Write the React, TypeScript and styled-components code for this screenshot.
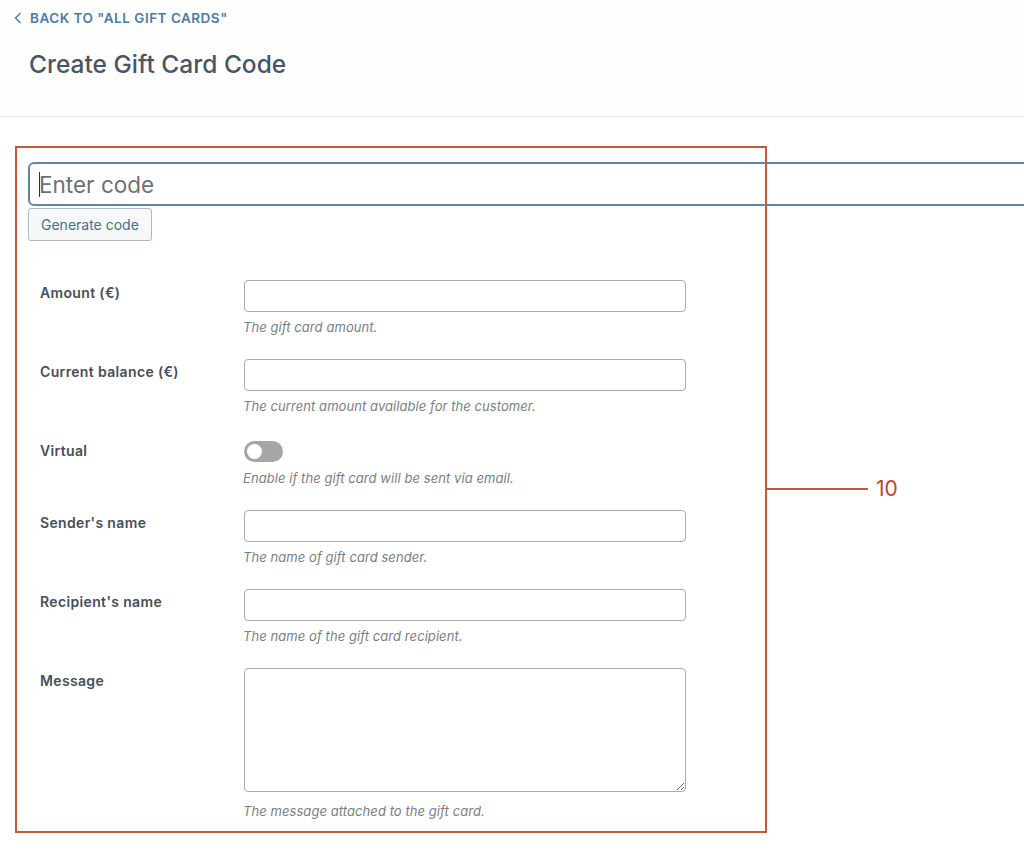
import React from "react";
import styled, { createGlobalStyle } from "styled-components";

const Global = createGlobalStyle`
  html, body { margin: 0; padding: 0; background: #ffffff; overflow: hidden; }
  body { font-family: Inter, "Noto Sans", "Liberation Sans", sans-serif; }
  * { box-sizing: border-box; }
`;

const Page = styled.div`
  position: relative;
  width: 1024px;
  height: 854px;
  overflow: hidden;
  background: #ffffff;
`;

const Header = styled.header`
  padding: 10px 0 0 0;
  height: 117px;
  border-bottom: 1px solid #e3e6e6;
  background: #fefefe;
`;

const BackLink = styled.a`
  display: flex;
  align-items: center;
  gap: 8px;
  padding-left: 14px;
  height: 16px;
  color: #4b7ba3;
  font-size: 13.5px;
  font-weight: 600;
  letter-spacing: 0.5px;
  text-transform: uppercase;
  text-decoration: none;
`;

const Title = styled.h1`
  margin: 23px 0 0 29px;
  font-size: 24.5px;
  line-height: 30px;
  font-weight: 500;
  color: #4a5563;
  letter-spacing: 0;
`;

const Form = styled.form`
  padding: 45px 0 0 28px;
`;

const CodeWrap = styled.div`
  position: relative;
  width: 1010px;
`;

const CodeInput = styled.input`
  display: block;
  width: 100%;
  height: 44px;
  border: 2px solid #5f86a9;
  border-radius: 6px;
  padding: 0 9px;
  font-family: inherit;
  font-size: 22.5px;
  color: #333;
  background: #fff;
  outline: none;
  &::placeholder { color: #6d7176; }
`;

const Caret = styled.span`
  position: absolute;
  left: 11px;
  top: 10px;
  width: 1px;
  height: 25px;
  background: #333;
`;

const GenButton = styled.button`
  display: block;
  margin-top: 2px;
  height: 33px;
  padding: 0 12px;
  background: #f6f7f7;
  border: 1px solid #a9b9c6;
  border-radius: 3px;
  font-family: inherit;
  font-size: 14px;
  color: #44708f;
`;

const Rows = styled.div`
  margin-top: 39px;
  display: flex;
  flex-direction: column;
`;

const Row = styled.div<{ $bottom?: number }>`
  display: grid;
  grid-template-columns: 204px 442px;
  padding-left: 12px;
  padding-bottom: ${(p) => p.$bottom ?? 24}px;
`;

const Label = styled.label`
  padding-top: 3px;
  font-size: 14px;
  line-height: 20px;
  font-weight: 600;
  letter-spacing: 0.35px;
  color: #474e57;
`;

const Field = styled.div`
  display: flex;
  flex-direction: column;
`;

const TextInput = styled.input`
  height: 32px;
  width: 442px;
  border: 1px solid #a9abae;
  border-radius: 4px;
  background: #fff;
  font-family: inherit;
  font-size: 14px;
  outline: none;
`;

const TextArea = styled.textarea`
  height: 124px;
  width: 442px;
  border: 1px solid #a9abae;
  border-radius: 4px;
  background: #fff;
  font-family: inherit;
  font-size: 14px;
  outline: none;
`;

const Desc = styled.p<{ $top?: number }>`
  margin: ${(p) => p.$top ?? 7}px 0 0 -1px;
  font-size: 13px;
  line-height: 16px;
  font-style: italic;
  letter-spacing: 0.07px;
  color: #7a7e83;
`;

const Toggle = styled.span`
  display: block;
  margin-top: 3px;
  width: 39px;
  height: 21px;
  border-radius: 11px;
  background: #a5a6a8;
  position: relative;
  &::after {
    content: "";
    position: absolute;
    left: 3px;
    top: 3px;
    width: 15px;
    height: 15px;
    border-radius: 50%;
    background: #ffffff;
  }
`;

const Annotation = styled.div`
  position: absolute;
  left: 15px;
  top: 146px;
  width: 752px;
  height: 687px;
  border: 2px solid #c9553c;
  pointer-events: none;
`;

const Callout = styled.div`
  position: absolute;
  left: 766px;
  top: 476px;
  display: flex;
  align-items: center;
  gap: 8px;
  pointer-events: none;
`;

const CalloutLine = styled.span`
  display: block;
  width: 102px;
  height: 2px;
  background: #c9553c;
`;

const CalloutNum = styled.span`
  font-size: 21px;
  line-height: 26px;
  color: #b9482f;
  font-family: Inter, "Liberation Sans", sans-serif;
`;

const fields = [
  { label: "Amount (€)", desc: "The gift card amount." },
  { label: "Current balance (€)", desc: "The current amount available for the customer." },
];

const fields2 = [
  { label: "Sender's name", desc: "The name of gift card sender." },
  { label: "Recipient's name", desc: "The name of the gift card recipient." },
];

export default function App() {
  return (
    <Page>
      <Global />
      <Header>
        <BackLink href="#">
          <svg width="8" height="12" viewBox="0 0 8 12" fill="none">
            <polyline points="6.5,1 1.5,6 6.5,11" stroke="#4b7ba3" strokeWidth="1.4" />
          </svg>
          Back to "All gift cards"
        </BackLink>
        <Title>Create Gift Card Code</Title>
      </Header>
      <Form onSubmit={(e) => e.preventDefault()}>
        <CodeWrap>
          <CodeInput placeholder="Enter code" />
          <Caret />
        </CodeWrap>
        <GenButton type="button">Generate code</GenButton>
        <Rows>
          {fields.map((f) => (
            <Row key={f.label}>
              <Label>{f.label}</Label>
              <Field>
                <TextInput />
                <Desc>{f.desc}</Desc>
              </Field>
            </Row>
          ))}
          <Row>
            <Label>Virtual</Label>
            <Field>
              <Toggle />
              <Desc $top={8}>Enable if the gift card will be sent via email.</Desc>
            </Field>
          </Row>
          {fields2.map((f) => (
            <Row key={f.label}>
              <Label>{f.label}</Label>
              <Field>
                <TextInput />
                <Desc>{f.desc}</Desc>
              </Field>
            </Row>
          ))}
          <Row>
            <Label>Message</Label>
            <Field>
              <TextArea />
              <Desc $top={11}>The message attached to the gift card.</Desc>
            </Field>
          </Row>
        </Rows>
      </Form>
      <Annotation />
      <Callout>
        <CalloutLine />
        <CalloutNum>10</CalloutNum>
      </Callout>
    </Page>
  );
}
